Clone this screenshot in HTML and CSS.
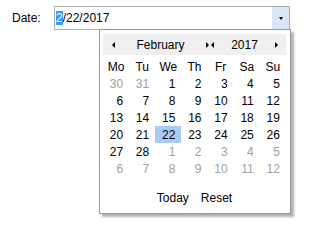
FILE: index.html
```html
<!DOCTYPE html>
<html lang="en">
<head>
    <meta charset="UTF-8">
    <title>Date picker</title>
    <link rel="stylesheet" href="styles.css">
</head>
<body>
    <div class="field">
        <label class="label">Date:</label>
        <div class="input">
            <span class="text"><span class="sel">2</span>/22/2017</span>
            <span class="drop"><span class="caret"></span></span>
        </div>
    </div>

    <div class="popup">
        <div class="nav">
            <span class="arr arr-l"></span>
            <span class="month">February</span>
            <span class="arr arr-r"></span>
            <span class="arr arr-l gap"></span>
            <span class="year">2017</span>
            <span class="arr arr-r"></span>
        </div>

        <div class="grid">
            <div class="dn">Mo</div><div class="dn">Tu</div><div class="dn">We</div><div class="dn">Th</div><div class="dn">Fr</div><div class="dn">Sa</div><div class="dn">Su</div>

            <div class="d other"><span>30</span></div><div class="d other"><span>31</span></div><div class="d"><span>1</span></div><div class="d"><span>2</span></div><div class="d"><span>3</span></div><div class="d"><span>4</span></div><div class="d"><span>5</span></div>
            <div class="d"><span>6</span></div><div class="d"><span>7</span></div><div class="d"><span>8</span></div><div class="d"><span>9</span></div><div class="d"><span>10</span></div><div class="d"><span>11</span></div><div class="d"><span>12</span></div>
            <div class="d"><span>13</span></div><div class="d"><span>14</span></div><div class="d"><span>15</span></div><div class="d"><span>16</span></div><div class="d"><span>17</span></div><div class="d"><span>18</span></div><div class="d"><span>19</span></div>
            <div class="d"><span>20</span></div><div class="d"><span>21</span></div><div class="d active"><span>22</span></div><div class="d"><span>23</span></div><div class="d"><span>24</span></div><div class="d"><span>25</span></div><div class="d"><span>26</span></div>
            <div class="d"><span>27</span></div><div class="d"><span>28</span></div><div class="d other"><span>1</span></div><div class="d other"><span>2</span></div><div class="d other"><span>3</span></div><div class="d other"><span>4</span></div><div class="d other"><span>5</span></div>
            <div class="d other"><span>6</span></div><div class="d other"><span>7</span></div><div class="d other"><span>8</span></div><div class="d other"><span>9</span></div><div class="d other"><span>10</span></div><div class="d other"><span>11</span></div><div class="d other"><span>12</span></div>
        </div>

        <div class="footer">
            <span class="link">Today</span>
            <span class="link">Reset</span>
        </div>
    </div>
</body>
</html>
```

FILE: styles.css
```css
body {
    margin: 0;
    font-family: "Liberation Sans", Arial, sans-serif;
    font-size: 12px;
    color: #000;
    background-color: #fff;
}
.field {
    display: flex;
    align-items: center;
    padding: 6px 0 0 12px;
}
.label {
    width: 42px;
}
.input {
    display: flex;
    align-items: center;
    width: 236px;
    height: 24px;
    box-sizing: border-box;
    border: 1px solid #abadb3;
    padding-left: 1px;
}
.sel {
    background-color: #3399ff;
    color: #fff;
}
.drop {
    margin-left: auto;
    align-self: stretch;
    width: 17px;
    background-color: #dae6f5;
    display: flex;
    align-items: center;
    justify-content: center;
}
.caret {
    width: 0;
    height: 0;
    border-top: 3px solid #000;
    border-left: 2.5px solid transparent;
    border-right: 2.5px solid transparent;
    margin-top: 1px;
}

/* dropdown calendar */
.popup {
    position: absolute;
    left: 99px;
    top: 29px;
    width: 192px;
    height: 185px;
    box-sizing: border-box;
    border: 1px solid #999;
    background-color: #fff;
    padding: 4px 4px 0 3px;
    box-shadow: 3px 3px 2px rgba(0, 0, 0, 0.3);
}
.nav {
    display: flex;
    align-items: center;
    height: 21px;
    background-color: #f0f0f0;
    padding: 0 8px 0 9px;
}
.arr {
    width: 0;
    height: 0;
    border-top: 3px solid transparent;
    border-bottom: 3px solid transparent;
}
.arr-l {
    border-right: 3px solid #000;
}
.arr-r {
    border-left: 3px solid #000;
}
.arr.gap {
    margin-left: 2px;
}
.month {
    width: 91px;
    text-align: center;
}
.year {
    flex: 1;
    text-align: center;
}
.grid {
    display: grid;
    grid-template-columns: repeat(7, 1fr);
    grid-auto-rows: 17px;
    margin-top: 3px;
}
.dn, .d {
    display: flex;
    align-items: center;
    justify-content: center;
}
.d span {
    display: inline-block;
    width: 14px;
    text-align: right;
}
.d.other {
    color: #a0a0a0;
}
.d.active {
    background-color: #aacbf5;
}
.footer {
    display: flex;
    justify-content: center;
    gap: 12px;
    margin-top: 13px;
    line-height: 17px;
}
```
